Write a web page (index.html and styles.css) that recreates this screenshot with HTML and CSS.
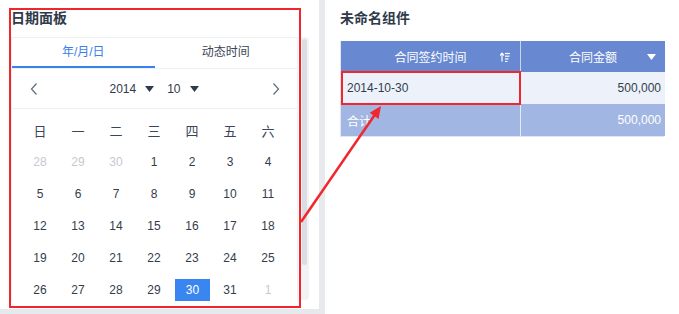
FILE: index.html
```html
<!DOCTYPE html>
<html lang="zh">
<head>
<meta charset="utf-8">
<link rel="stylesheet" href="styles.css">
</head>
<body>
<div class="page">
  <div class="left-col">
    <div class="left-panel">
      <div class="title">日期面板</div>
      <div class="cal-wrap">
        <div class="cal">
          <div class="tabs">
            <div class="tab active">年/月/日</div>
            <div class="tab">动态时间</div>
          </div>
          <div class="nav">
            <svg class="chev" width="8" height="12" viewBox="0 0 8 12"><polyline points="6.5,0.5 1.5,6 6.5,11.5" fill="none" stroke="#5d6d82" stroke-width="1.2"/></svg>
            <div class="ym">
              <span class="sel">2014<svg class="tri" width="9" height="6" viewBox="0 0 9 6"><polygon points="0,0 9,0 4.5,6" fill="#2f3b4c"/></svg></span>
              <span class="sel">10<svg class="tri" width="9" height="6" viewBox="0 0 9 6"><polygon points="0,0 9,0 4.5,6" fill="#2f3b4c"/></svg></span>
            </div>
            <svg class="chev" width="8" height="12" viewBox="0 0 8 12"><polyline points="1.5,0.5 6.5,6 1.5,11.5" fill="none" stroke="#5d6d82" stroke-width="1.2"/></svg>
          </div>
          <div class="grid">
            <div class="wd">日</div><div class="wd">一</div><div class="wd">二</div><div class="wd">三</div><div class="wd">四</div><div class="wd">五</div><div class="wd">六</div>
            <div class="d muted">28</div><div class="d muted">29</div><div class="d muted">30</div><div class="d">1</div><div class="d">2</div><div class="d">3</div><div class="d">4</div>
            <div class="d">5</div><div class="d">6</div><div class="d">7</div><div class="d">8</div><div class="d">9</div><div class="d">10</div><div class="d">11</div>
            <div class="d">12</div><div class="d">13</div><div class="d">14</div><div class="d">15</div><div class="d">16</div><div class="d">17</div><div class="d">18</div>
            <div class="d">19</div><div class="d">20</div><div class="d">21</div><div class="d">22</div><div class="d">23</div><div class="d">24</div><div class="d">25</div>
            <div class="d">26</div><div class="d">27</div><div class="d">28</div><div class="d">29</div><div class="d"><span class="picked">30</span></div><div class="d">31</div><div class="d muted">1</div>
          </div>
        </div>
        <div class="scroll"><div class="thumb"></div></div>
      </div>
    </div>
  </div>
  <div class="divider"></div>
  <div class="right-panel">
    <div class="title">未命名组件</div>
    <div class="table">
      <div class="th c1">
        <span class="sp1"></span>
        <span class="th-text">合同签约时间</span>
        <svg class="sort" width="10" height="10" viewBox="0 0 10 10"><g fill="none" stroke="#fff" stroke-width="1.2"><line x1="2" y1="1.5" x2="2" y2="9.5"/><polyline points="0,3.5 2,1.2 4,3.5"/><line x1="5" y1="1.5" x2="10" y2="1.5"/><line x1="5" y1="4.2" x2="9.5" y2="4.2"/><line x1="5" y1="6.9" x2="8.5" y2="6.9"/><line x1="5" y1="9.5" x2="7.5" y2="9.5"/></g></svg>
      </div>
      <div class="th c2">
        <span class="sp2"></span>
        <span class="th-text">合同金额</span>
        <svg class="drop" width="9" height="6" viewBox="0 0 9 6"><polygon points="0,0 9,0 4.5,6" fill="#fff"/></svg>
      </div>
      <div class="td c1">2014-10-30</div>
      <div class="td num">500,000</div>
      <div class="tt c1">合计</div>
      <div class="tt num">500,000</div>
    </div>
  </div>
</div>
<div class="mark mark-panel"></div>
<div class="mark mark-cell"></div>
<svg class="arrow" width="679" height="314" viewBox="0 0 679 314">
  <line x1="301" y1="222" x2="376" y2="113" stroke="#f0282e" stroke-width="2.5"/>
  <polygon points="381,106 378.6,119 369.8,112.8" fill="#f0282e"/>
</svg>
</body>
</html>
```

FILE: styles.css
```css
* { box-sizing: border-box; }
html, body { margin: 0; padding: 0; }
body {
  width: 679px;
  height: 314px;
  overflow: hidden;
  background: #fff;
  font-family: "Liberation Sans", "Noto Sans CJK SC", sans-serif;
  color: #333d4c;
  position: relative;
}
.page {
  display: flex;
  height: 314px;
}
.left-col {
  width: 319px;
  background: #e8e9ed;
  padding-bottom: 5px;
  flex: none;
}
.left-panel {
  background: #fff;
  height: 309px;
  padding: 8px 0 0 11px;
}
.title {
  font-size: 14px;
  font-weight: bold;
  line-height: 20px;
  height: 20px;
  color: #2f3a4a;
}
.left-panel .title { margin-bottom: 9px; }
.cal-wrap {
  display: flex;
}
.cal {
  width: 287px;
  height: 264px;
  border: 1px solid #eceff4;
  border-bottom: none;
  overflow: hidden;
  flex: none;
}
.tabs {
  display: flex;
  border-bottom: 1px solid #eceff4;
}
.tab {
  flex: 1;
  height: 30px;
  line-height: 28px;
  text-align: center;
  font-size: 12px;
  color: #3a4556;
}
.tab.active {
  color: #3b7fe8;
  box-shadow: inset 0 -2px 0 #3b82ee;
}
.nav {
  height: 40px;
  border-bottom: 1px solid #eceff4;
  display: flex;
  align-items: center;
  padding: 0 17px 0 18px;
}
.chev { flex: none; }
.ym {
  flex: 1;
  display: flex;
  justify-content: center;
  gap: 13px;
  font-size: 12px;
  color: #2f3b4c;
  padding-right: 2px;
}
.sel {
  display: flex;
  align-items: center;
}
.tri { margin-left: 9px; }
.grid {
  display: grid;
  grid-template-columns: repeat(7, 38px);
  grid-auto-rows: 32px;
  padding: 5px 0 0 9px;
}
.wd, .d {
  display: flex;
  align-items: center;
  justify-content: center;
}
.wd {
  font-size: 13px;
  color: #3a4556;
}
.d {
  font-size: 12px;
  color: #333d4c;
}
.d.muted { color: #c6c9cf; }
.picked {
  width: 35px;
  height: 23px;
  background: #3a86f0;
  color: #fff;
  display: flex;
  align-items: center;
  justify-content: center;
  margin-left: 1px;
}
.scroll {
  width: 9px;
  height: 263px;
  margin-left: 2px;
  background: #f3f3f5;
  border-radius: 4px;
  padding: 2px 0 0 2px;
}
.thumb {
  width: 5px;
  height: 226px;
  background: #dcdde2;
  border-radius: 3px;
}
.divider {
  width: 6px;
  background: #e8e9ed;
  flex: none;
}
.right-panel {
  flex: 1;
  padding: 8px 0 0 15px;
}
.right-panel .title { margin-bottom: 13px; }
.table {
  display: grid;
  grid-template-columns: 180px 144px;
  grid-template-rows: 31px 32px 32px;
  width: 324px;
  border: 1px solid #dfe5f2;
  border-top: none;
}
.th {
  background: #6889d2;
  color: #fff;
  font-size: 12px;
  display: flex;
  align-items: center;
}
.th.c1 { padding: 0 10px 0 10px; border-right: 1px solid #c9d5ee; }
.th.c2 { padding: 0 9px 0 9px; }
.sp1 { width: 10px; flex: none; }
.sp2 { width: 9px; flex: none; }
.th-text { flex: 1; text-align: center; }
.sort, .drop { flex: none; }
.td {
  background: #edf2fa;
  font-size: 12px;
  color: #333d4c;
  display: flex;
  align-items: center;
}
.td.c1 { padding-left: 6px; border-right: 1px solid #dfe5f2; }
.num { justify-content: flex-end; padding-right: 4px; }
.tt {
  background: #a1b6e2;
  color: #fff;
  font-size: 12px;
  display: flex;
  align-items: center;
}
.tt.c1 { padding-left: 6px; border-right: 1px solid #e4eaf6; }
.mark {
  position: absolute;
  border: 2px solid #f0262d;
  pointer-events: none;
}
.mark-panel {
  left: 9px;
  top: 8px;
  width: 292px;
  height: 300px;
}
.mark-cell {
  left: 341px;
  top: 71px;
  width: 180px;
  height: 34px;
}
.arrow {
  position: absolute;
  left: 0;
  top: 0;
  pointer-events: none;
}
```
